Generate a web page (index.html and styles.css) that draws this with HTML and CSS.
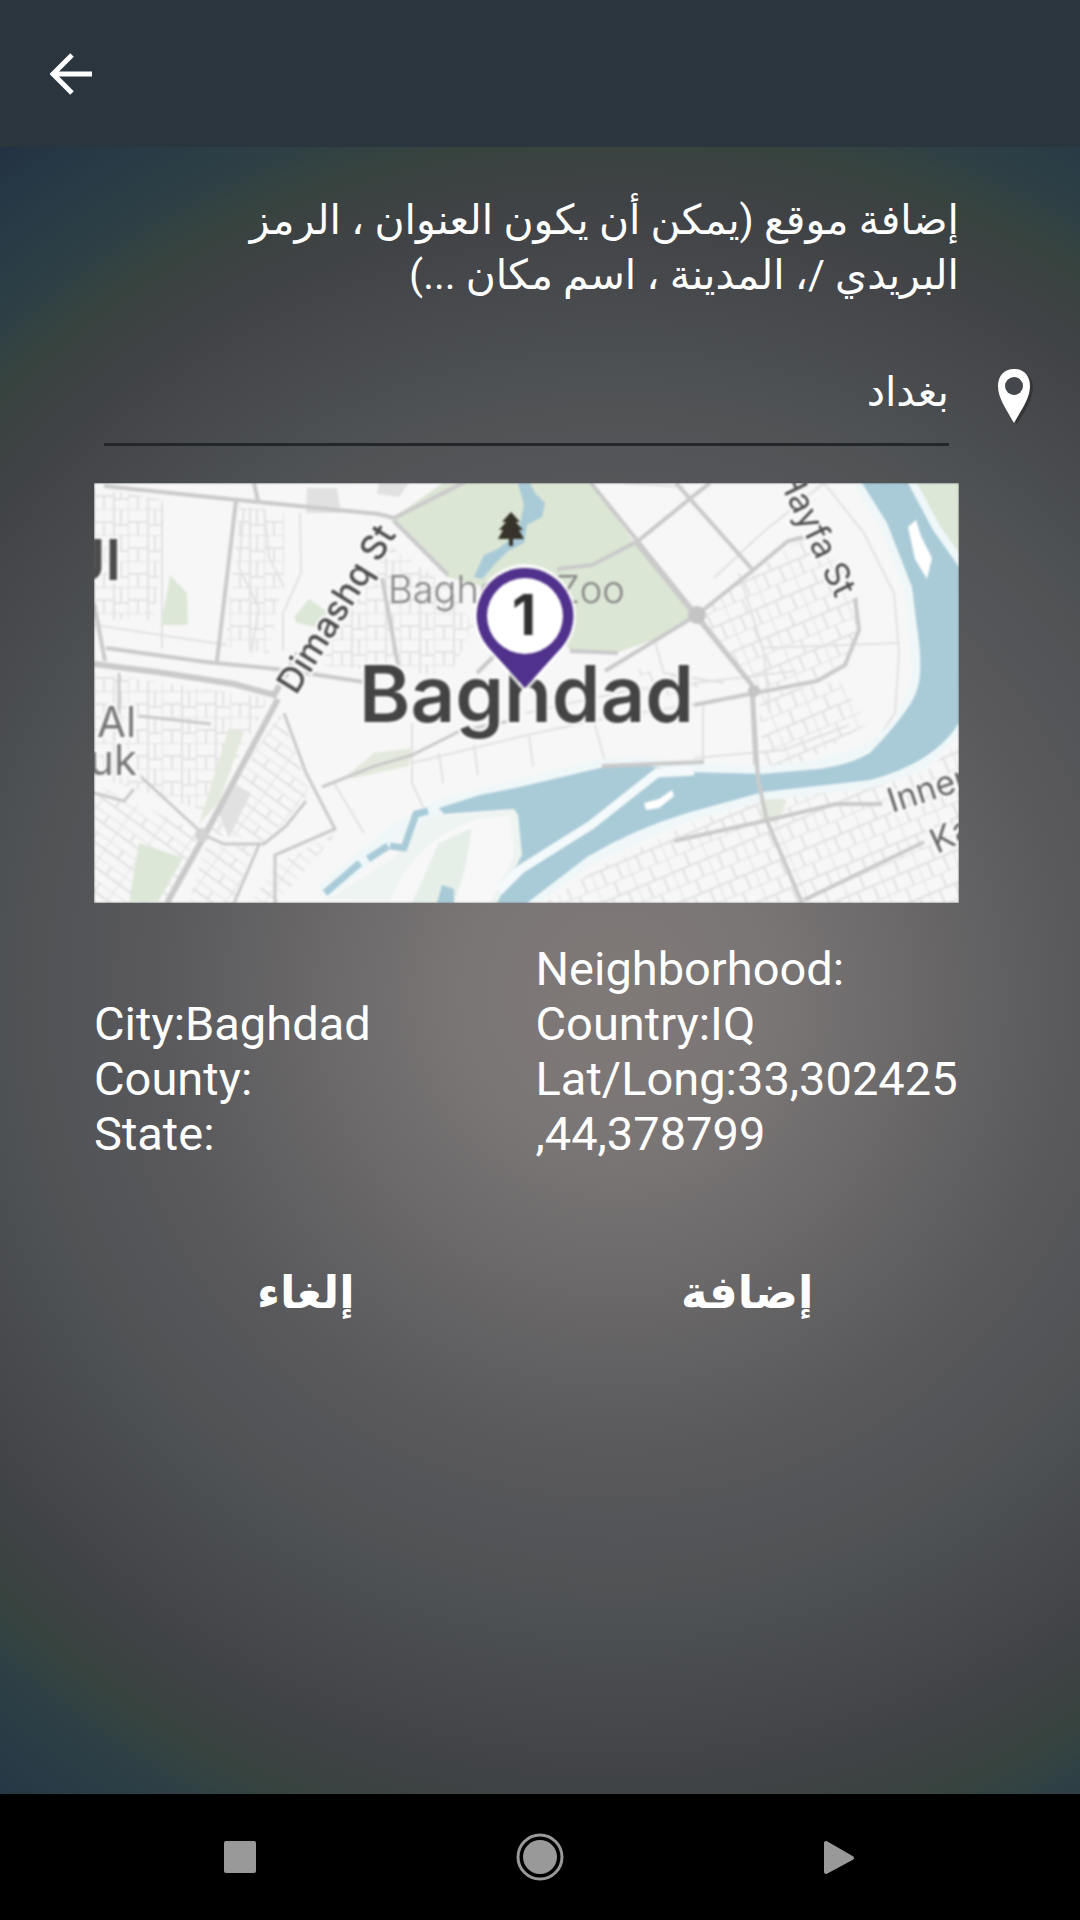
FILE: index.html
```html
<!DOCTYPE html>
<html lang="ar">
<head>
    <meta charset="UTF-8">
    <meta name="viewport" content="width=device-width, initial-scale=1.0">
    <title>إضافة موقع</title>
    <link rel="stylesheet" href="styles.css">
</head>
<body>
<header class="toolbar">
    <button class="icon-button" type="button" aria-label="رجوع">
        <svg width="42" height="42" viewBox="0 0 42 42" fill="none" stroke="#fff" stroke-width="5">
            <path d="M42 21H4M22 2L3 21l19 19"/>
        </svg>
    </button>
</header>
<main class="content">
    <label class="prompt" for="location" dir="rtl">إضافة موقع (يمكن أن يكون العنوان ، الرمز البريدي /، المدينة ، اسم مكان ...)</label>
    <div class="search">
        <input class="search-input" id="location" type="text" dir="rtl" value="بغداد">
        <svg class="search-pin" width="36" height="58" viewBox="0 0 36 58">
            <path fill="#222" opacity=".5" d="M19 3C9 3 3 10 3 19c0 12 9 24 17 37 8-13 16-25 16-37C36 10 29 3 19 3z"/>
            <path fill="#fff" d="M17 1C7 1 1 8 1 18c0 12 8 23 16 37 8-14 16-25 16-37C33 8 27 1 17 1z"/>
            <circle cx="17" cy="18" r="9" fill="#44484c"/>
        </svg>
    </div>

    <svg class="map" viewBox="0 0 865 420" role="img" aria-label="Baghdad">
        <defs>
            <pattern id="blocks" width="34" height="26" patternUnits="userSpaceOnUse">
                <path d="M0 0H34M0 13H20M0 0V26M20 0V26M10 13V26M27 0V16M20 16H34" fill="none" stroke="#e3e3e3" stroke-width="2"/>
            </pattern>
            <pattern id="blocks-right" width="38" height="30" patternUnits="userSpaceOnUse" patternTransform="rotate(-23)">
                <path d="M0 0H38M0 15H38M0 0V30M19 0V15M11 15V30M28 15V30" fill="none" stroke="#e1e1e1" stroke-width="2"/>
            </pattern>
            <pattern id="blocks-left" width="32" height="20" patternUnits="userSpaceOnUse" patternTransform="rotate(36)">
                <path d="M0 0H32M0 10H32M0 0V20M16 0V10" fill="none" stroke="#e1e1e1" stroke-width="2"/>
            </pattern>
        </defs>
        <rect width="865" height="420" fill="#f7f7f7"/>

        <!-- side streets -->
        <path fill="url(#blocks)" d="M0 5l70 12v28l-10 92H0zM146 22l44 8v60l-15 80-44-6zM235 145l60-82 60 40 25 40-25 50-125-10zM0 190l175 25-60 115L0 292z"/>
        <path fill="url(#blocks-left)" d="M0 300l105 50-30 70H0zM186 230l30 80-45 50-56-10 20-40zM110 365l50-2-20 57H95zM185 380l58-30-60 70h-28z"/>
        <path fill="url(#blocks-right)" d="M450 420L510 382 600 338 675 316 780 304 835 286 865 258V420zM605 130l55-42 60-40 45 60-5 60-35 30-65 8zM665 212l80-14 30 42-62 38-44 6zM540 185l82 15-60 16z"/>
        <path fill="none" stroke="#e1e1e1" stroke-width="2" d="M68 20v145M206 30l1 60-18 40v38M150 25l-5 60 20 40-8 45M170 26l5 48 15 30M0 142l133 20M318 240v60l14 30M432 230l100-22 170-20M318 280l115-28 76-16 100-16v60M345 270l4 30M380 262l4 30M435 253l4 30M500 238l12 45M530 0l60 4M620 95l48-45 62-50M730 0l40 50 30 60 5 60-4 60-20 30-60 25M600 275l90-8 65-25M668 165l138-5M645 90l25 80 6 60M560 155l10 35 60 10M240 300l30 50"/>

        <!-- parks -->
        <path fill="#dce6d5" d="M296 37L349 0h149l43 60 62 72-44 25-40 14-43-4-40-50-83-23z"/>
        <path fill="#dde7d8" d="M76 92l17 18 1 32H67zM200 134l15-18 20 14-14 14-18-4zM45 360l44 15-25 44H35zM816 0h49v72l-35-45z"/>
        <path fill="#e4e9dd" d="M250 295l30-25 38-5-3 18-55 12zM135 245l15 4-25 70-20 22zM667 316h26l-10 24-16-4z"/>
        <path fill="#e1e1e1" d="M213 5h30l4 25h-35zM285 0h30l-10 14-22-3zM137 300l20 10-22 45-10-24z"/>

        <!-- water -->
        <path fill="none" stroke="#eff7f9" stroke-width="16" stroke-linejoin="round" d="M768 0L793 40 818 104 823 144 826 197 809 240 776 270 713 287 668 291 593 289 548 282 510 284 426 304 345 325 300 350 229 410M433 420L493 374 593 330 669 309 776 297 826 280 865 240M814 0L839 47 865 84"/>
        <path fill="#eef4f1" d="M235 416L300 375 332 335 422 327 428 372 403 420z"/>
        <path fill="#f8f8f8" d="M295 420Q320 355 385 336L416 333 420 372 396 420z"/>
        <path fill="#e5efe8" d="M318 420L345 360 378 345 370 390 360 420z"/>
        <path fill="#a9cbd7" d="M768 0L793 40 818 104 823 144Q830 190 822 210T776 270Q750 285 713 287L668 291 593 289 548 282 510 284 426 304 386 312 345 325 350 331 420 326 424 332 428 372 403 420H433L493 374Q540 346 593 330L669 309 776 297Q840 280 865 240V84L839 47 814 0z"/>
        <path fill="none" stroke="#a9cbd7" stroke-width="7" d="M231 410l35-30M274 376l20-13M296 363l14 2 12-34 12-3"/>
        <path fill="none" stroke="#f4fafb" stroke-width="9" d="M600 288l-37 2-66 52-70 44-22 22"/>
        <path fill="#fff" d="M814 44l8-7 5 16 11 22-5 21-12-20zM550 320l15-4 13-9 2 6-15 12-13 2z"/>
        <path fill="#a9cbd7" d="M424 0h12l5 10 10 10-3 14-15 8-3 18-16 8-14 14-12 14-8-2 10-22 14-6 20-16 6-28zM348 402l12 4v14h-17z"/>

        <!-- main roads -->
        <g fill="none" stroke="#cacaca" stroke-width="4">
            <path d="M10 3L144 17 284 31 300 35 375-3M142 18L123 178M160 0l4 18M0 120l11 58M12 165L112 179 192 187 270 199M300 38l54 54M288 95l20 108M383 190l22-22"/>
            <path d="M0 181L70 190 140 201 180 212 204 170M184 216L112 350 73 420" stroke-width="6"/>
            <path d="M190 230l22 60 29 56-60 26v48M45 292l65 60M0 310l30 8 10-12M110 352l20 9h40l22-18 20-25M165 362l-25 58M25 190v60M45 233l72 8M228 304l50-20 40-12 48-24 60-12" stroke-width="3"/>
            <path d="M497 0L603 132 658 202 664 296 673 338 708 420M582 0l76 86M603 132l55-44 36-30 24-6M463 86l35-4 46-24 54-44 18-14M603 132l-92 56M476 168l48 2M600 222l61-12 62-12 28-16 14-35-4-32M580 358l90-20 72-17h46M710 417l120-58M508 283l102-4"/>
            <path d="M658 202l4 80M541 58l117 144" stroke-width="5"/>
        </g>
        <circle cx="603" cy="132" r="9" fill="#c4c4c4"/>
        <circle cx="660" cy="208" r="6" fill="#c4c4c4"/>
        <circle cx="108" cy="352" r="7" fill="#d2d2d2"/>

        <g fill="#4c4c4c" stroke="#fafafa" stroke-width="5" paint-order="stroke" font-size="34">
            <text x="27" y="97" text-anchor="end" font-size="56" font-weight="600">JI</text>
            <text x="3" y="254" font-size="42" fill="#777">Al</text>
            <text x="43" y="292" text-anchor="end" font-size="42" fill="#777">uk</text>
            <text transform="translate(202 213) rotate(-58)" font-size="35" font-weight="500">Dimashq St</text>
            <text x="294" y="120" font-size="38" font-weight="300" fill="#858585" stroke="none">Baghdad Zoo</text>
            <text transform="translate(742 116) rotate(64)" text-anchor="end">Hayfa St</text>
            <text transform="translate(798 330) rotate(-18)" fill="#666">Inner</text>
            <text transform="translate(843 371) rotate(-25)" fill="#666">Ka</text>
            <text x="265" y="239" font-size="78" font-weight="600" fill="#444">Baghdad</text>
        </g>

        <path fill="#37332a" d="M417 29l9 10h-4l7 8h-4l5 9h-11v7h-4v-7h-11l5-9h-4l7-8h-4z"/>

        <path fill="#fff" opacity=".8" d="M431 81a52 52 0 0 0-40 84l40 45 40-45a52 52 0 0 0-40-84z"/>
        <path fill="#50318c" d="M431 85a48 48 0 0 0-37 79l37 41 37-41a48 48 0 0 0-37-79z"/>
        <circle cx="431" cy="133" r="38" fill="#fff"/>
        <text x="430" y="152" text-anchor="middle" font-size="56" font-weight="700" fill="#303030">1</text>
    </svg>

    <div class="details">
        <div class="details-column">
            <div>City:Baghdad</div>
            <div>County:</div>
            <div>State:</div>
        </div>
        <div class="details-column">
            <div>Neighborhood:</div>
            <div>Country:IQ</div>
            <div>Lat/Long:33,302425<br>,44,378799</div>
        </div>
    </div>

    <div class="actions">
        <button class="action" type="button">إلغاء</button>
        <button class="action" type="button">إضافة</button>
    </div>
</main>
<nav class="system-bar">
    <button class="icon-button" type="button" aria-label="Recent">
        <svg width="48" height="48" viewBox="0 0 48 48"><rect x="8" y="8" width="32" height="32" rx="2" fill="#999"/></svg>
    </button>
    <button class="icon-button" type="button" aria-label="Home">
        <svg width="48" height="48" viewBox="0 0 48 48" fill="#999">
            <circle cx="24" cy="24" r="17"/>
            <circle cx="24" cy="24" r="22" fill="none" stroke="#999" stroke-width="3"/>
        </svg>
    </button>
    <button class="icon-button" type="button" aria-label="Back">
        <svg width="48" height="48" viewBox="0 0 48 48"><path d="M10 10v29l26-14z" fill="#999" stroke="#999" stroke-width="4" stroke-linejoin="round"/></svg>
    </button>
</nav>
</body>
</html>
```
FILE: styles.css
```css
* {
    box-sizing: border-box;
}

body {
    margin: 0;
    min-height: 100vh;
    display: flex;
    flex-direction: column;
    font-family: Roboto, "DejaVu Sans", sans-serif;
    color: #fff;
    background: radial-gradient(circle at 57% 995px,
        #7f7977 0, #7b7676 150px, #6a6869 300px, #5f5e60 400px,
        #59595c 460px, #545558 540px, #4e5153 620px, #424448 770px,
        #3d4243 820px, #37433f 860px, #2e4045 910px, #283b46 970px,
        #233243 1050px);
}

button {
    padding: 0;
    border: none;
    background: none;
    color: inherit;
    font-family: inherit;
    cursor: pointer;
}

.icon-button {
    display: flex;
}

.toolbar {
    height: 147px;
    padding: 0 50px;
    display: flex;
    align-items: center;
    background-color: #2b353e;
}

.content {
    flex: 1;
    padding: 46px 121px 0 94px;
}

.prompt {
    display: block;
    padding-left: 130px;
    font-size: 41px;
    line-height: 55px;
}

.search {
    display: flex;
    align-items: center;
    gap: 48px;
    margin: 45px -74px 37px 10px;
}

.search-input {
    flex: 1;
    min-width: 0;
    height: 98px;
    padding: 0 0 8px;
    border: none;
    border-bottom: 3px solid #23272a;
    outline: none;
    background: none;
    color: inherit;
    font-family: inherit;
    font-size: 41px;
}

.search-pin {
    flex: none;
}

.map {
    display: block;
    width: 100%;
    font-family: Inter, sans-serif;
    filter: blur(1px);
    clip-path: inset(0);
}

.details {
    display: grid;
    grid-template-columns: 1fr 1fr;
    gap: 18px;
    align-items: end;
    margin-top: 38px;
    font-size: 47px;
    line-height: 55px;
}

.actions {
    display: grid;
    grid-template-columns: 1fr 1fr;
    gap: 18px;
    margin-top: 81px;
}

.action {
    height: 100px;
    font-size: 45px;
    font-weight: bold;
}

.system-bar {
    height: 126px;
    padding: 0 216px;
    display: flex;
    align-items: center;
    justify-content: space-between;
    background-color: #000;
}
```
